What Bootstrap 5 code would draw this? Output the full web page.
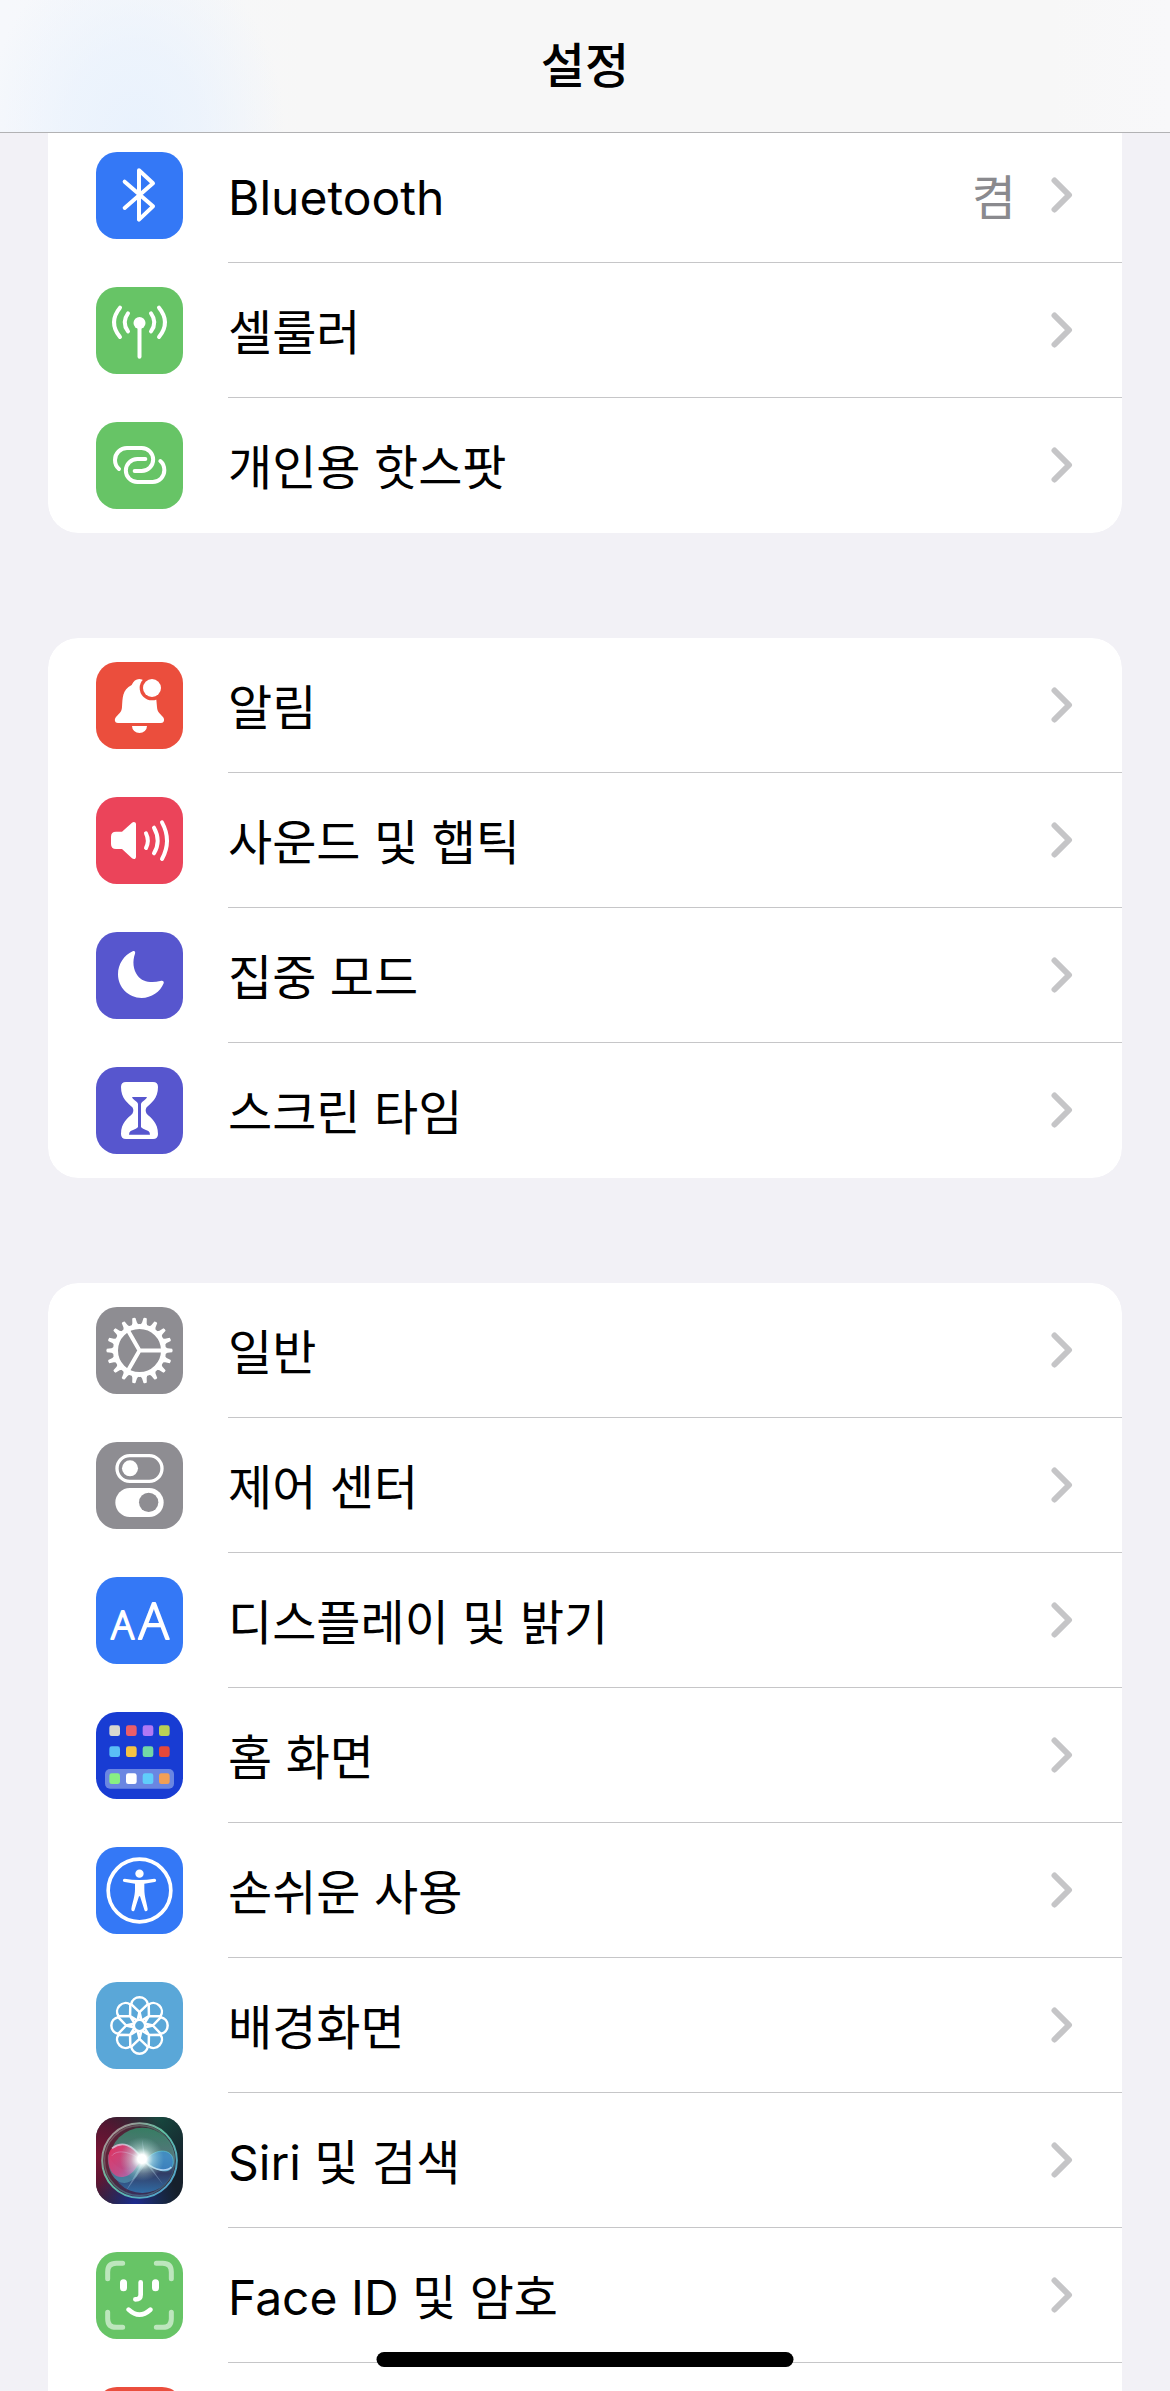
<!DOCTYPE html>
<html lang="ko">
<head>
<meta charset="utf-8">
<meta name="viewport" content="width=device-width, initial-scale=1">
<title>설정</title>
<link href="https://cdn.jsdelivr.net/npm/bootstrap@5.3.0/dist/css/bootstrap.min.css" rel="stylesheet">
<style>
  body { background: #f2f1f6; color: #000; font-family: Inter, "Noto Sans CJK KR", sans-serif; font-size: 48px; line-height: 72px; }
  .top-bar { height: 133px; border-bottom: 1px solid #b2b2b4; background: radial-gradient(ellipse 150px 190px at 135px 133px, #e9f2fd 0, rgba(233, 242, 253, .7) 45%, rgba(240, 245, 250, 0) 100%), linear-gradient(90deg, #f6f8fc 0, #f7f7f7 26%, #f7f7f7 90%, #f8f8fa 100%); }
  .top-title { font-size: 48px; line-height: 72px; font-weight: 500; }
  .settings { padding: 128px 48px 0; gap: 105px; }
  .settings .list-group { --bs-list-group-border-width: 0; --bs-list-group-border-radius: 30px; overflow: hidden; flex-shrink: 0; }
  .settings .list-group:first-child { border-top-left-radius: 0; border-top-right-radius: 0; }
  .setting { height: 135px; padding: 0 0 0 48px; gap: 45px; color: #000; }
  .setting:hover, .setting:focus { color: #000; }
  .setting-body { padding: 0 49px 0 0; gap: 35px; border-bottom: 1px solid #c6c6c8; }
  .setting:last-child .setting-body { border-bottom-color: transparent; }
  .setting-label, .setting-value { padding-top: 5px; }
  .setting-value { color: #8a8a8e; }
  .app-icon { width: 87px; height: 87px; border-radius: 21px; flex: none; display: block; fill: #fff; }
  .ln { fill: none; stroke: #fff; stroke-width: 12px; stroke-linecap: round; stroke-linejoin: round; }
  .chev { width: 22px; height: 36px; flex: none; fill: none; stroke: #c5c5c7; stroke-width: 6px; stroke-linecap: round; stroke-linejoin: round; }
  .bg-blue { background: #3478f6; } .bg-green { background: #67c466; } .bg-redorange { background: #eb4e3d; }
  .bg-pink { background: #eb445a; } .bg-violet { background: #5756ce; } .bg-grey { background: #8e8d92; }
  .bg-deep { background: #183cd3; } .bg-sky { background: #5aa7d8; } .bg-night { background: #16202c; }
  .home-bar { width: 417px; height: 15px; bottom: 24px; border-radius: 8px; background: #000; z-index: 1040; }
</style>
<script src="https://cdn.jsdelivr.net/npm/bootstrap@5.3.0/dist/js/bootstrap.bundle.min.js"></script>
</head>
<body class="vh-100 overflow-hidden">
<svg class="d-none" aria-hidden="true">
  <symbol id="chevron" viewBox="0 0 22 36"><path d="M3.500 3.500 L18 18 L3.500 32.500"/></symbol>
</svg>

<header class="top-bar fixed-top d-flex align-items-center justify-content-center">
  <h1 class="top-title m-0">설정</h1>
</header>

<main class="settings d-flex flex-column vh-100 overflow-hidden">
  <div class="list-group">
    <a href="#" class="setting list-group-item list-group-item-action d-flex align-items-center">
      <svg class="app-icon bg-blue" viewBox="0 0 261 261"><path class="ln" d="M86 89 L171 163 L129 203 V55 L171 94 L86 168"/></svg>
      <span class="setting-body d-flex align-items-center flex-grow-1 align-self-stretch"><span class="setting-label flex-grow-1">Bluetooth</span><span class="setting-value">켬</span><svg class="chev"><use href="#chevron"/></svg></span>
    </a>
    <a href="#" class="setting list-group-item list-group-item-action d-flex align-items-center">
      <svg class="app-icon bg-green" viewBox="0 0 261 261"><circle cx="130.500" cy="108" r="18"/><path class="ln" d="M130.500 108 V209 M96 79 Q76 106 96 133 M72 62 Q36 106 72 150 M165 79 Q185 106 165 133 M189 62 Q225 106 189 150"/></svg>
      <span class="setting-body d-flex align-items-center flex-grow-1 align-self-stretch"><span class="setting-label flex-grow-1">셀룰러</span><svg class="chev"><use href="#chevron"/></svg></span>
    </a>
    <a href="#" class="setting list-group-item list-group-item-action d-flex align-items-center">
      <svg class="app-icon bg-green" viewBox="0 0 261 261"><path class="ln" d="M69 141 Q57 131 57 114 A36 36 0 0 1 93 78 H137 A34.500 34.500 0 0 1 137 147 H116 M148 111 H124 A34.500 34.500 0 0 0 124 180 H170 A35 35 0 0 0 205 145 Q205 127 193 117"/></svg>
      <span class="setting-body d-flex align-items-center flex-grow-1 align-self-stretch"><span class="setting-label flex-grow-1">개인용 핫스팟</span><svg class="chev"><use href="#chevron"/></svg></span>
    </a>
  </div>

  <div class="list-group">
    <a href="#" class="setting list-group-item list-group-item-action d-flex align-items-center">
      <svg class="app-icon bg-redorange" viewBox="0 0 261 261"><path d="M66 183 C56 183 54 172 60 165 C70 154 77 150 78 135 C80 108 78 84 107 69 C112 57 120 51 130 51 C141 51 149 57 154 69 C181 84 181 108 183 135 C184 150 191 154 201 165 C207 172 205 183 195 183 Z M108 192 H153 A22.500 21 0 0 1 108 192Z"/><circle cx="168" cy="78" r="37" fill="#eb4e3d"/><circle cx="168" cy="78" r="27"/></svg>
      <span class="setting-body d-flex align-items-center flex-grow-1 align-self-stretch"><span class="setting-label flex-grow-1">알림</span><svg class="chev"><use href="#chevron"/></svg></span>
    </a>
    <a href="#" class="setting list-group-item list-group-item-action d-flex align-items-center">
      <svg class="app-icon bg-pink" viewBox="0 0 261 261"><path d="M60 104 H78 L108 77 C113 73 120 75 120 82 V179 C120 187 113 188 108 184 L78 156 H60 Q45 156 45 141 V119 Q45 104 60 104Z"/><path class="ln" d="M150 109 Q161 131 150 153 M174 92 Q196 131 174 169 M198 76 Q228 131 198 186"/></svg>
      <span class="setting-body d-flex align-items-center flex-grow-1 align-self-stretch"><span class="setting-label flex-grow-1">사운드 및 햅틱</span><svg class="chev"><use href="#chevron"/></svg></span>
    </a>
    <a href="#" class="setting list-group-item list-group-item-action d-flex align-items-center">
      <svg class="app-icon bg-violet" viewBox="0 0 261 261"><path d="M110 58 C116 55 119 60 117 65 C109 87 111 112 125 131 C138 149 165 154 193 147 C200 144 205 148 203 154 C193 180 166 198 137 198 C97 198 66 166 66 127 C66 97 84 69 110 58Z"/></svg>
      <span class="setting-body d-flex align-items-center flex-grow-1 align-self-stretch"><span class="setting-label flex-grow-1">집중 모드</span><svg class="chev"><use href="#chevron"/></svg></span>
    </a>
    <a href="#" class="setting list-group-item list-group-item-action d-flex align-items-center">
      <svg class="app-icon bg-violet" viewBox="0 0 261 261"><path d="M90 45 H171 Q186 45 186 60 C186 95 165 108 152 121 Q146 130 152 140 C165 153 186 166 186 201 Q186 216 171 216 H90 Q75 216 75 201 C75 166 96 153 109 140 Q115 130 109 121 C96 108 75 95 75 60 Q75 45 90 45Z"/><path fill="#5756ce" d="M108 90 H153 Q152 95 146 99 Q135 106 135 112 V180 Q137 184 157 192 Q162 195 162 203 H99 Q99 195 104 192 Q124 184 126 180 V112 Q126 106 115 99 Q109 95 108 90Z"/></svg>
      <span class="setting-body d-flex align-items-center flex-grow-1 align-self-stretch"><span class="setting-label flex-grow-1">스크린 타임</span><svg class="chev"><use href="#chevron"/></svg></span>
    </a>
  </div>

  <div class="list-group">
    <a href="#" class="setting list-group-item list-group-item-action d-flex align-items-center">
      <svg class="app-icon bg-grey" viewBox="-130.500 -130.500 261 261">
        <defs><path id="tooth" d="M76 -11 L84 -7 L98 -5 Q101 0 98 5 L84 7 L76 11Z"/>
        <g id="teeth"><use href="#tooth"/><use href="#tooth" transform="rotate(20)"/><use href="#tooth" transform="rotate(40)"/><use href="#tooth" transform="rotate(60)"/><use href="#tooth" transform="rotate(80)"/><use href="#tooth" transform="rotate(100)"/></g></defs>
        <use href="#teeth"/><use href="#teeth" transform="rotate(120)"/><use href="#teeth" transform="rotate(240)"/>
        <circle r="72" fill="none" stroke="#fff" stroke-width="15"/>
        <path class="ln" d="M0 0 H68 M0 0 L-34 -59 M0 0 L-34 59"/>
      </svg>
      <span class="setting-body d-flex align-items-center flex-grow-1 align-self-stretch"><span class="setting-label flex-grow-1">일반</span><svg class="chev"><use href="#chevron"/></svg></span>
    </a>
    <a href="#" class="setting list-group-item list-group-item-action d-flex align-items-center">
      <svg class="app-icon bg-grey" viewBox="0 0 261 261"><rect x="63" y="41" width="135" height="77" rx="38.500" fill="none" stroke="#fff" stroke-width="10"/><circle cx="102" cy="79" r="24"/><rect x="58" y="138" width="145" height="87" rx="43.500"/><circle cx="158" cy="181" r="29" fill="#8e8d92"/></svg>
      <span class="setting-body d-flex align-items-center flex-grow-1 align-self-stretch"><span class="setting-label flex-grow-1">제어 센터</span><svg class="chev"><use href="#chevron"/></svg></span>
    </a>
    <a href="#" class="setting list-group-item list-group-item-action d-flex align-items-center">
      <svg class="app-icon bg-blue" viewBox="0 0 261 261" font-family="Open Sans, sans-serif" font-weight="300" stroke="#fff" stroke-width="6" stroke-linejoin="round"><text x="80" y="185" font-size="113" text-anchor="middle">A</text><text x="173" y="185" font-size="150" text-anchor="middle">A</text></svg>
      <span class="setting-body d-flex align-items-center flex-grow-1 align-self-stretch"><span class="setting-label flex-grow-1">디스플레이 및 밝기</span><svg class="chev"><use href="#chevron"/></svg></span>
    </a>
    <a href="#" class="setting list-group-item list-group-item-action d-flex align-items-center">
      <svg class="app-icon bg-deep" viewBox="0 0 261 261"><rect x="27" y="171" width="207" height="59" rx="15" fill="#6a86e2"/>
        <rect x="40" y="40" width="32" height="32" rx="7" fill="#d8d8cf"/><rect x="90" y="40" width="32" height="32" rx="7" fill="#ea5e69"/><rect x="140" y="40" width="32" height="32" rx="7" fill="#b078f5"/><rect x="189" y="40" width="32" height="32" rx="7" fill="#b9d155"/>
        <rect x="40" y="103" width="32" height="32" rx="7" fill="#5abef6"/><rect x="90" y="103" width="32" height="32" rx="7" fill="#f5c344"/><rect x="140" y="103" width="32" height="32" rx="7" fill="#72d8a6"/><rect x="189" y="103" width="32" height="32" rx="7" fill="#e5483a"/>
        <rect x="40" y="184" width="32" height="32" rx="7" fill="#88ef83"/><rect x="90" y="184" width="32" height="32" rx="7"/><rect x="140" y="184" width="32" height="32" rx="7" fill="#60cdfb"/><rect x="189" y="184" width="32" height="32" rx="7" fill="#f19f55"/></svg>
      <span class="setting-body d-flex align-items-center flex-grow-1 align-self-stretch"><span class="setting-label flex-grow-1">홈 화면</span><svg class="chev"><use href="#chevron"/></svg></span>
    </a>
    <a href="#" class="setting list-group-item list-group-item-action d-flex align-items-center">
      <svg class="app-icon bg-blue" viewBox="0 0 261 261"><circle cx="130.500" cy="130.500" r="94" fill="none" stroke="#fff" stroke-width="11"/><circle cx="130.500" cy="80" r="12.500"/><path d="M86 95 Q130 103 175 95 C182 95 182 104 176 105 L145 110 V125 C145 150 152 165 155 186 C155 194 147 195 145 188 L132 148 H129 L116 188 C114 195 106 194 106 186 C109 165 117 150 117 125 V110 L86 105 C79 104 79 95 86 95Z"/></svg>
      <span class="setting-body d-flex align-items-center flex-grow-1 align-self-stretch"><span class="setting-label flex-grow-1">손쉬운 사용</span><svg class="chev"><use href="#chevron"/></svg></span>
    </a>
    <a href="#" class="setting list-group-item list-group-item-action d-flex align-items-center">
      <svg class="app-icon bg-sky" viewBox="-130.500 -130.500 261 261" stroke="#fff" stroke-width="7.500" stroke-linejoin="round">
        <defs><path id="petal" fill="none" d="M0 -40 L-25 -64 A25.500 25.500 0 0 1 25 -64 L0 -40 L-6 -15 M0 -40 L6 -15"/></defs>
        <use href="#petal"/><use href="#petal" transform="rotate(45)"/><use href="#petal" transform="rotate(90)"/><use href="#petal" transform="rotate(135)"/><use href="#petal" transform="rotate(180)"/><use href="#petal" transform="rotate(225)"/><use href="#petal" transform="rotate(270)"/><use href="#petal" transform="rotate(315)"/>
        <circle r="17" fill="none"/>
      </svg>
      <span class="setting-body d-flex align-items-center flex-grow-1 align-self-stretch"><span class="setting-label flex-grow-1">배경화면</span><svg class="chev"><use href="#chevron"/></svg></span>
    </a>
    <a href="#" class="setting list-group-item list-group-item-action d-flex align-items-center">
      <svg class="app-icon bg-night" viewBox="0 0 261 261">
        <defs>
          <radialGradient id="sRed" cx="0" cy=".45" r=".85"><stop offset="0" stop-color="#7a1434"/><stop offset=".4" stop-color="#6a1434" stop-opacity=".8"/><stop offset="1" stop-color="#5a1030" stop-opacity="0"/></radialGradient>
          <radialGradient id="sGrn" cx=".7" cy="0" r=".6"><stop offset="0" stop-color="#17493f"/><stop offset="1" stop-color="#17493f" stop-opacity="0"/></radialGradient>
          <radialGradient id="sBlu" cx=".45" cy="1" r=".5"><stop offset="0" stop-color="#1c2a90"/><stop offset="1" stop-color="#1b3a70" stop-opacity="0"/></radialGradient>
          <linearGradient id="sRing" x1="0" y1="0" x2="1" y2="1"><stop offset="0" stop-color="#c08090"/><stop offset=".45" stop-color="#5fc0a0"/><stop offset="1" stop-color="#4f9ad8"/></linearGradient>
          <linearGradient id="sOrb" x1="0" y1="0" x2="0" y2="1"><stop offset="0" stop-color="#358a6a"/><stop offset=".45" stop-color="#5c8488"/><stop offset=".7" stop-color="#30406e"/><stop offset="1" stop-color="#2f78b4"/></linearGradient>
          <linearGradient id="sPink" x1="0" y1="0" x2="1" y2="1"><stop offset="0" stop-color="#f02a5c"/><stop offset=".6" stop-color="#cc4a88"/><stop offset="1" stop-color="#9a88d4"/></linearGradient>
          <radialGradient id="sGlow"><stop offset="0" stop-color="#fff"/><stop offset=".2" stop-color="#fff"/><stop offset=".5" stop-color="#d8fff4" stop-opacity=".45"/><stop offset="1" stop-color="#a0e0d8" stop-opacity="0"/></radialGradient>
        </defs>
        <rect width="261" height="261" fill="url(#sGrn)"/><rect width="261" height="261" fill="url(#sRed)"/><rect width="261" height="261" fill="url(#sBlu)"/>
        <circle cx="130.500" cy="130.500" r="112" fill="#54303e" fill-opacity=".5" stroke="url(#sRing)" stroke-width="6"/>
        <circle cx="130.500" cy="130.500" r="105" fill="none" stroke="url(#sRing)" stroke-opacity=".4" stroke-width="4"/>
        <circle cx="139" cy="130" r="98" fill="url(#sOrb)" fill-opacity=".85"/>
        <path d="M36 110 C30 180 80 226 122 178 L146 130 C110 170 60 170 36 110Z" fill="#58a0b8" fill-opacity=".6"/>
        <path d="M136 128 C105 62 36 70 37 126 C38 190 90 192 116 158 Z" fill="url(#sPink)" fill-opacity=".9"/>
        <path d="M136 130 C95 98 60 100 48 116" fill="none" stroke="#d890c0" stroke-opacity=".6" stroke-width="3"/>
        <path d="M48 94 C80 70 110 85 136 122" fill="none" stroke="#d8e0f0" stroke-opacity=".7" stroke-width="5"/>
        <path d="M148 130 C180 90 232 95 232 134 C232 172 188 172 148 130Z" fill="#3e93d8" fill-opacity=".75" stroke="#5fd0dc" stroke-opacity=".6" stroke-width="3"/>
        <path d="M146 134 C180 166 215 162 226 150" fill="none" stroke="#c8e4ff" stroke-width="5" stroke-opacity=".8"/>
        <path d="M142 128 L90 222 L150 140 L202 204 L150 128 L138 66Z" fill="#b8d8f0" fill-opacity=".35"/>
        <circle cx="138" cy="126" r="66" fill="url(#sGlow)"/>
      </svg>
      <span class="setting-body d-flex align-items-center flex-grow-1 align-self-stretch"><span class="setting-label flex-grow-1">Siri 및 검색</span><svg class="chev"><use href="#chevron"/></svg></span>
    </a>
    <a href="#" class="setting list-group-item list-group-item-action d-flex align-items-center">
      <svg class="app-icon bg-green" viewBox="0 0 261 261" stroke="#fff" stroke-linecap="round"><g fill="none"><path stroke="#bde6bd" stroke-width="15" d="M35 80 V60 Q35 34 61 34 H80 M181 34 H200 Q226 34 226 60 V80 M226 181 V200 Q226 226 200 226 H181 M80 226 H61 Q35 226 35 200 V181"/><path stroke-width="21" d="M82.500 92 V107 M178.500 92 V107"/><path stroke-width="14" d="M134 91 V128 Q134 142 118 142 M98 173 Q130 203 163 173"/></g></svg>
      <span class="setting-body d-flex align-items-center flex-grow-1 align-self-stretch"><span class="setting-label flex-grow-1">Face ID 및 암호</span><svg class="chev"><use href="#chevron"/></svg></span>
    </a>
    <div class="setting list-group-item d-flex align-items-center">
      <svg class="app-icon bg-redorange" viewBox="0 0 261 261"></svg>
    </div>
  </div>
</main>

<div class="home-bar position-fixed start-50 translate-middle-x"></div>
</body>
</html>
